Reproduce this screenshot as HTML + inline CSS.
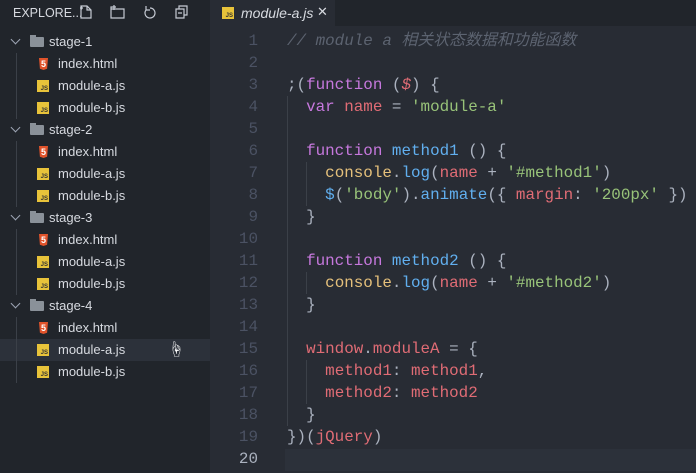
<!DOCTYPE html>
<html><head><meta charset="utf-8"><style>
body{margin:0;width:696px;height:473px;overflow:hidden;background:#282c34;font-family:"Liberation Sans","Noto Sans CJK SC",sans-serif;position:relative}
#side{position:absolute;left:0;top:0;width:210px;height:473px;background:#21252b;color:#d7dae0;font-size:13px}
#tabs{position:absolute;left:210px;top:0;width:486px;height:26px;background:#21252b}
#tab{position:absolute;left:210px;top:0;width:125px;height:26px;background:#282c34;color:#d7dae0;font-size:14px;font-style:italic}
.row{position:absolute;left:0;width:210px;height:22px;line-height:22px}
.js{position:absolute;width:12px;height:12px;background:#e8c33a;top:5px}
.js:after{content:"JS";position:absolute;right:1px;bottom:-1px;font-size:6px;color:#333;font-weight:bold;line-height:7px;font-style:normal}
.h5{position:absolute;width:9px;height:12px;background:#e0532b;top:5px;color:#fff;font-size:9px;line-height:12px;text-align:center;font-weight:bold;clip-path:polygon(0 0,100% 0,90% 90%,50% 100%,10% 90%)}
.fold{position:absolute;left:30px;top:6px;width:14px;height:10px;background:#8a9199;border-radius:1px}
.fold:before{content:"";position:absolute;left:0;top:-2px;width:6px;height:3px;background:#8a9199}
.chev{position:absolute;left:12px;top:5px;width:6px;height:6px;border-right:1.3px solid #9da5b4;border-bottom:1.3px solid #9da5b4;transform:rotate(45deg)}
.guide{position:absolute;left:16px;width:1px;background:#3b4048}
#code{position:absolute;left:210px;top:30px;width:486px;font-family:"Liberation Mono","Noto Sans CJK SC",monospace;font-size:15.9px;color:#abb2bf}
.l{height:22px;line-height:22px;white-space:pre;position:relative}
.n{display:inline-block;width:48px;text-align:right;color:#4b5263;margin-right:29px}
.c{color:#5c6370;font-style:italic}.k{color:#c678dd}.f{color:#61afef}.s{color:#98c379}.r{color:#e06c75}.y{color:#e5c07b}
.ig{position:absolute;width:1px;background:#3b4048}
</style></head><body>
<div id="side">
<div style="position:absolute;left:13px;top:6px;font-size:12.5px;color:#d7dae0">EXPLORE...</div>
<svg style="position:absolute;left:78px;top:4px" width="120" height="16" fill="none" stroke="#c5cad3" stroke-width="1.2">
<path d="M3 2h6l4 4v8H3z M9 2v4h4 M2 4h3 M3.5 2.5v3"/>
<path d="M33 5h13v9H33z M33 5v-2h4 M36 1v5 M34 3h4"/>
<path d="M72 4a5 5 0 1 1 -4 2 M68 2v4h4"/>
<path d="M98 5h8v9h-8z M101 5V2h8v9h-3 M100 9h4"/>
</svg>
<div class="row" style="top:31px"><span class="chev"></span><span class="fold"></span><span style="position:absolute;left:49px">stage-1</span></div>
<div class="row" style="top:53px"><span class="h5" style="left:39px">5</span><span style="position:absolute;left:58px">index.html</span></div>
<div class="row" style="top:75px"><span class="js" style="left:37px"></span><span style="position:absolute;left:58px">module-a.js</span></div>
<div class="row" style="top:97px"><span class="js" style="left:37px"></span><span style="position:absolute;left:58px">module-b.js</span></div>
<div class="row" style="top:119px"><span class="chev"></span><span class="fold"></span><span style="position:absolute;left:49px">stage-2</span></div>
<div class="row" style="top:141px"><span class="h5" style="left:39px">5</span><span style="position:absolute;left:58px">index.html</span></div>
<div class="row" style="top:163px"><span class="js" style="left:37px"></span><span style="position:absolute;left:58px">module-a.js</span></div>
<div class="row" style="top:185px"><span class="js" style="left:37px"></span><span style="position:absolute;left:58px">module-b.js</span></div>
<div class="row" style="top:207px"><span class="chev"></span><span class="fold"></span><span style="position:absolute;left:49px">stage-3</span></div>
<div class="row" style="top:229px"><span class="h5" style="left:39px">5</span><span style="position:absolute;left:58px">index.html</span></div>
<div class="row" style="top:251px"><span class="js" style="left:37px"></span><span style="position:absolute;left:58px">module-a.js</span></div>
<div class="row" style="top:273px"><span class="js" style="left:37px"></span><span style="position:absolute;left:58px">module-b.js</span></div>
<div class="row" style="top:295px"><span class="chev"></span><span class="fold"></span><span style="position:absolute;left:49px">stage-4</span></div>
<div class="row" style="top:317px"><span class="h5" style="left:39px">5</span><span style="position:absolute;left:58px">index.html</span></div>
<div class="row" style="top:339px;background:#2c313a"><span class="js" style="left:37px"></span><span style="position:absolute;left:58px">module-a.js</span><span style="position:absolute;left:168px;top:1px;color:#fff;font-size:16px">☝</span></div>
<div class="row" style="top:361px"><span class="js" style="left:37px"></span><span style="position:absolute;left:58px">module-b.js</span></div>
<div class="guide" style="top:53px;height:66px"></div><div class="guide" style="top:141px;height:66px"></div><div class="guide" style="top:229px;height:66px"></div><div class="guide" style="top:317px;height:66px"></div>
</div>
<div id="tabs"></div>
<div id="tab"><span class="js" style="left:12px;top:7px"></span><span style="position:absolute;left:31px;top:5px">module-a.js</span><span style="position:absolute;left:107px;top:4px;font-style:normal;font-size:13px">✕</span></div>
<div style="position:absolute;left:285px;top:449px;width:411px;height:22px;background:#2c313a"></div>
<div class="ig" style="left:287px;top:96px;height:330px"></div>
<div class="ig" style="left:306px;top:162px;height:44px"></div>
<div class="ig" style="left:306px;top:272px;height:22px"></div>
<div class="ig" style="left:306px;top:360px;height:44px"></div>
<div id="code">
<div class="l"><span class="n">1</span><span class="c">// module a 相关状态数据和功能函数</span></div>
<div class="l"><span class="n">2</span></div>
<div class="l"><span class="n">3</span>;(<span class="k">function</span> (<span class="r" style="font-style:italic">$</span>) {</div>
<div class="l"><span class="n">4</span>  <span class="k">var</span> <span class="r">name</span> = <span class="s">'module-a'</span></div>
<div class="l"><span class="n">5</span></div>
<div class="l"><span class="n">6</span>  <span class="k">function</span> <span class="f">method1</span> () {</div>
<div class="l"><span class="n">7</span>    <span class="y">console</span>.<span class="f">log</span>(<span class="r">name</span> + <span class="s">'#method1'</span>)</div>
<div class="l"><span class="n">8</span>    <span class="f">$</span>(<span class="s">'body'</span>).<span class="f">animate</span>({ <span class="r">margin</span>: <span class="s">'200px'</span> })</div>
<div class="l"><span class="n">9</span>  }</div>
<div class="l"><span class="n">10</span></div>
<div class="l"><span class="n">11</span>  <span class="k">function</span> <span class="f">method2</span> () {</div>
<div class="l"><span class="n">12</span>    <span class="y">console</span>.<span class="f">log</span>(<span class="r">name</span> + <span class="s">'#method2'</span>)</div>
<div class="l"><span class="n">13</span>  }</div>
<div class="l"><span class="n">14</span></div>
<div class="l"><span class="n">15</span>  <span class="r">window</span>.<span class="r">moduleA</span> = {</div>
<div class="l"><span class="n">16</span>    <span class="r">method1</span>: <span class="r">method1</span>,</div>
<div class="l"><span class="n">17</span>    <span class="r">method2</span>: <span class="r">method2</span></div>
<div class="l"><span class="n">18</span>  }</div>
<div class="l"><span class="n">19</span>})(<span class="r">jQuery</span>)</div>
<div class="l"><span class="n" style="color:#abb2bf">20</span></div>
</div>
</body></html>
